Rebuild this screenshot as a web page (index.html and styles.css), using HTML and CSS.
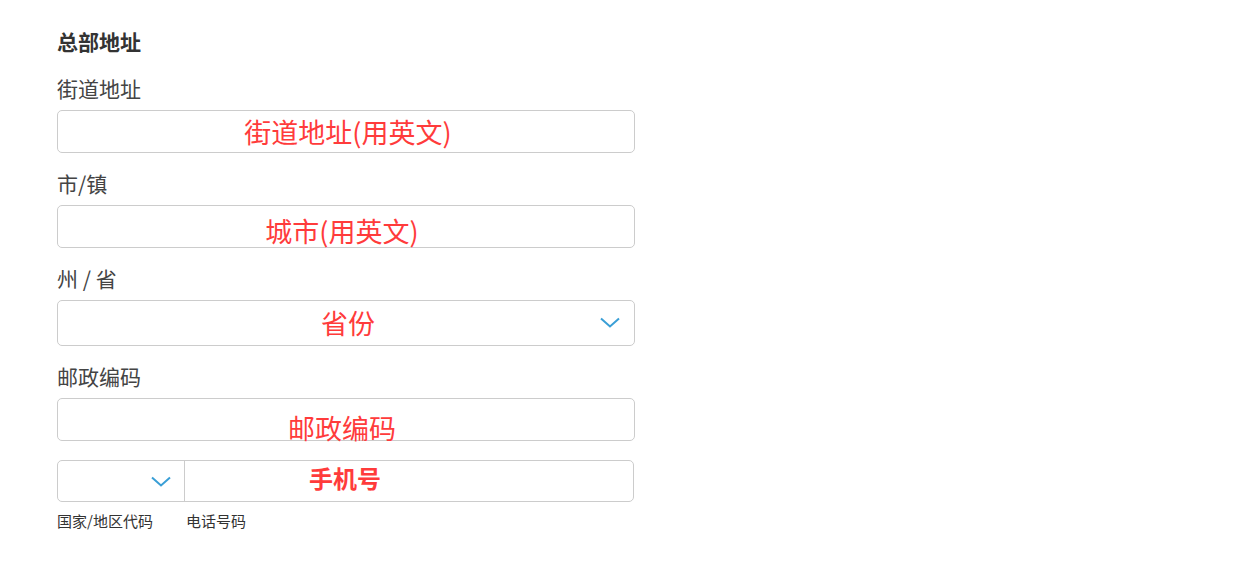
FILE: index.html
```html
<!DOCTYPE html>
<html lang="zh">
<head>
<meta charset="utf-8">
<link rel="stylesheet" href="styles.css">
</head>
<body>
<div class="form">
  <div class="title">总部地址</div>

  <div class="label">街道地址</div>
  <div class="field"><span class="ph">街道地址(用英文)</span></div>

  <div class="label">市/镇</div>
  <div class="field"><span class="ph ph-city">城市(用英文)</span></div>

  <div class="label">州 / 省</div>
  <div class="field select"><span class="ph">省份</span>
    <svg class="chev" width="20" height="11" viewBox="0 0 20 11"><path d="M1 1.5 L10 9.5 L19 1.5" fill="none" stroke="#3a9fd6" stroke-width="2"/></svg>
  </div>

  <div class="label">邮政编码</div>
  <div class="field"><span class="ph ph-zip">邮政编码</span></div>

  <div class="phone">
    <div class="code">
      <svg class="chev2" width="20" height="11" viewBox="0 0 20 11"><path d="M1 1.5 L10 9.5 L19 1.5" fill="none" stroke="#3a9fd6" stroke-width="2"/></svg>
    </div>
    <div class="num"></div>
    <span class="ph-phone">手机号</span>
  </div>
  <div class="sublabels">
    <span class="sub sub-code">国家/地区代码</span>
    <span class="sub">电话号码</span>
  </div>
</div>
</body>
</html>
```

FILE: styles.css
```css
html, body {
  margin: 0;
  padding: 0;
  background: #fff;
}
body {
  font-family: "Noto Sans CJK SC", "Noto Sans", sans-serif;
  color: #444;
}
.form {
  width: 578px;
  padding: 26px 0 0 57px;
}
.title {
  font-size: 21px;
  line-height: 30px;
  font-weight: bold;
  color: #333;
  margin-bottom: 17px;
}
.label {
  font-size: 21px;
  line-height: 30px;
  color: #444;
  margin-bottom: 7px;
}
.field {
  box-sizing: border-box;
  height: 43px;
  border: 1px solid #cccccc;
  border-radius: 5px;
  display: flex;
  align-items: center;
  justify-content: center;
  margin-bottom: 15px;
  position: relative;
}
.field.select {
  height: 46px;
}
.ph {
  font-size: 27px;
  line-height: 30px;
  color: #ff3b3b;
  margin-left: 4px;
}
.ph-city {
  margin-top: 8px;
  margin-left: -8px;
}
.ph-zip {
  margin-top: 16px;
  margin-left: -8px;
}
.chev {
  position: absolute;
  right: 14px;
  top: 16px;
}
.phone {
  box-sizing: border-box;
  height: 42px;
  width: 577px;
  margin-top: 19px;
  border: 1px solid #cccccc;
  border-radius: 5px;
  display: flex;
  position: relative;
}
.code {
  width: 126px;
  border-right: 1px solid #cccccc;
  position: relative;
}
.chev2 {
  position: absolute;
  right: 13px;
  top: 15px;
}
.num {
  flex: 1;
}
.ph-phone {
  position: absolute;
  left: 251px;
  top: 2px;
  font-size: 24px;
  line-height: 30px;
  font-weight: bold;
  color: #ff3b3b;
}
.sublabels {
  display: flex;
  margin-top: 9px;
}
.sub {
  font-size: 15px;
  line-height: 20px;
  color: #333;
}
.sub-code {
  width: 129px;
}
```
